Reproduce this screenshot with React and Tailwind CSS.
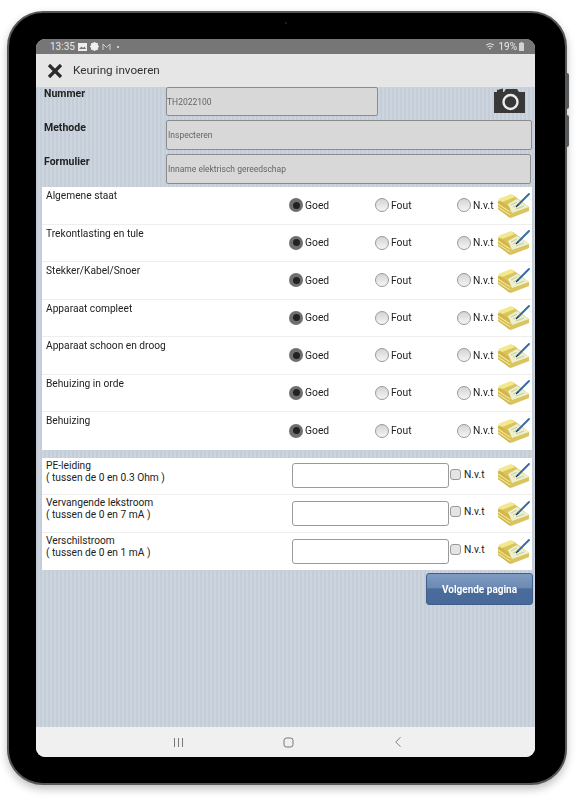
import React from 'react';
import { X, ChevronLeft } from 'lucide-react';

const checks = [
    'Algemene staat',
    'Trekontlasting en tule',
    'Stekker/Kabel/Snoer',
    'Apparaat compleet',
    'Apparaat schoon en droog',
    'Behuizing in orde',
    'Behuizing',
];

const measures = [
    { name: 'PE-leiding', range: '( tussen de 0 en 0.3 Ohm )' },
    { name: 'Vervangende lekstroom', range: '( tussen de 0 en 7 mA )' },
    { name: 'Verschilstroom', range: '( tussen de 0 en 1 mA )' },
];

const headerFields = [
    { label: 'Methode', value: 'Inspecteren', width: 'w-[366px]' },
    { label: 'Formulier', value: 'Inname elektrisch gereedschap', width: 'w-[365px]' },
];

function BookIcon() {
    return (
        <svg width="32" height="27" viewBox="0 0 32 27">
            <path d="M0 9 L15 3 L31 15 L31 19 L13 26 L0 17 Z" fill="#d9c45f" />
            <path d="M0 7 L13 2 L17 5 L4 10 Z" fill="#f4e88f" />
            <path d="M0 9 L4 10 L12 16 L12 26 L0 17 Z" fill="#d2b648" />
            <path d="M0 12 L12 20 M0 15 L12 23" stroke="#f2e79b" strokeWidth="1.1" />
            <path d="M10 12 L19 7 L31 15 L14 21 Z" fill="#eef0cd" />
            <path d="M13 13 L19 10 M15 15 L23 11 M18 17 L26 14" stroke="#bcc8a4" strokeWidth="0.9" />
            <path d="M20 13 L31 2" stroke="#3a6ba3" strokeWidth="1.9" strokeLinecap="round" />
            <path d="M18 15 L20 13" stroke="#1f3350" strokeWidth="1.3" />
        </svg>
    );
}

function Radio({ checked, label }) {
    return (
        <div className="flex items-center gap-[2px]">
            {checked ? (
                <span className="flex h-[14px] w-[14px] shrink-0 items-center justify-center rounded-full bg-[#6f6f6f]">
                    <span className="h-[7px] w-[7px] rounded-full bg-[#222222]" />
                </span>
            ) : (
                <span className="h-[14px] w-[14px] shrink-0 rounded-full border border-[#999999] bg-gradient-to-b from-[#d4d4d4] to-[#f5f5f5]" />
            )}
            <span className="text-[10.3px] text-[#222222]">{label}</span>
        </div>
    );
}

function CheckRow({ title, last }) {
    return (
        <div className={`grid h-[37.5px] grid-cols-[247px_86px_82px_41px_34px] ${last ? '' : 'border-b border-[#eeeeee]'}`}>
            <div className="pl-[4px] pt-[2px] text-[10.2px] leading-[13px] text-[#222222]">{title}</div>
            <div className="flex items-center"><Radio checked label="Goed" /></div>
            <div className="flex items-center"><Radio label="Fout" /></div>
            <div className="flex items-center"><Radio label="N.v.t" /></div>
            <div className="flex items-center"><BookIcon /></div>
        </div>
    );
}

function MeasureRow({ name, range, last }) {
    return (
        <div className={`grid h-[37.5px] grid-cols-[250px_158px_48px_34px] ${last ? '' : 'border-b border-[#eeeeee]'}`}>
            <div className="pl-[4px] pt-[2px] text-[10.2px] leading-[12px] text-[#222222]">
                <div>{name}</div>
                <div>{range}</div>
            </div>
            <div className="flex items-center">
                <div className="h-[25px] w-[157px] rounded-[3px] border border-[#9a9a9a] bg-white" />
            </div>
            <div className="flex items-center gap-[3px] pb-[3px]">
                <span className="h-[11px] w-[11px] rounded-[3px] border border-[#9a9a9a] bg-[#e4e4e4]" />
                <span className="text-[10.3px] text-[#222222]">N.v.t</span>
            </div>
            <div className="flex items-center"><BookIcon /></div>
        </div>
    );
}

function StatusBar() {
    return (
        <div className="flex h-[15px] shrink-0 items-center justify-between bg-[#767676] pl-[14px] pr-[11px] text-[10px] text-[#e8e8e8]">
            <div className="flex items-center gap-[3px]">
                <span>13:35</span>
                <svg width="9" height="8" viewBox="0 0 9 8"><path d="M0 0H9V8H0Z" fill="#eeeeee" /><path d="M1 6L3.5 3.5L5 5L6.5 3.5L8 6Z" fill="#767676" /></svg>
                <svg width="9" height="9" viewBox="0 0 9 9"><circle cx="4.5" cy="4.5" r="2.8" fill="none" stroke="#eeeeee" strokeWidth="2.2" /><path d="M4.5 0V9M0 4.5H9M1.3 1.3L7.7 7.7M7.7 1.3L1.3 7.7" stroke="#eeeeee" strokeWidth="1" /></svg>
                <svg width="9" height="8" viewBox="0 0 9 8"><path d="M1 7V1L4.5 4.5L8 1V7" fill="none" stroke="#cfcfcf" strokeWidth="1" /></svg>
                <span className="ml-[3px] h-[2px] w-[2px] rounded-full bg-[#eeeeee]" />
            </div>
            <div className="flex items-center gap-[2px]">
                <svg width="11" height="9" viewBox="0 0 11 9"><path d="M1 3Q5 0 9 3M2.5 5Q5 3 7.5 5M4 7Q5 6 6 7" fill="none" stroke="#e2e2e2" strokeWidth="1" /></svg>
                <span>19%</span>
                <svg width="5" height="9" viewBox="0 0 5 9"><path d="M1.5 0H3.5V1H5V9H0V1H1.5Z" fill="#d2d2d2" /></svg>
            </div>
        </div>
    );
}

function HeaderForm() {
    return (
        <div className="flex h-[100px] shrink-0 flex-col gap-[4px] pl-[8px]">
            <div className="flex h-[29px]">
                <div className="w-[122px] text-[10.5px] font-bold leading-[13px] text-[#222222]">Nummer</div>
                <div className="flex w-[212px] items-center rounded-[2px] border border-[#8c8c8c] bg-[#d8d8d8] pt-[1px] text-[8.5px] text-[#666666]">TH2022100</div>
                <svg className="ml-[116px] mt-[1px]" width="31" height="25" viewBox="0 0 31 25">
                    <path d="M0 4H3V2L9 0.5V4H10L12 1H23L25 4H31V25H0Z" fill="#383838" />
                    <circle cx="16.5" cy="14" r="7" fill="none" stroke="#e8ecef" strokeWidth="2.4" />
                </svg>
            </div>
            {headerFields.map((f) => (
                <div key={f.label} className="flex h-[30px]">
                    <div className="w-[122px] pt-[1px] text-[10.5px] font-bold leading-[13px] text-[#222222]">{f.label}</div>
                    <div className={`flex items-center rounded-[2px] border border-[#8c8c8c] bg-[#d8d8d8] pl-[1px] pt-[1px] text-[8.5px] text-[#666666] ${f.width}`}>{f.value}</div>
                </div>
            ))}
        </div>
    );
}

function App() {
    return (
        <div className="h-[800px] w-[582px] overflow-hidden bg-white pl-[7px] pt-[11px] font-['Roboto',sans-serif]">
            <div className="relative flex h-[774px] w-[560px] rounded-[36px] border-2 border-[#55595c] bg-black pl-[27px] pt-[26px] shadow-[0_4px_8px_rgba(0,0,0,0.25)] blur-[0.35px]">
                <span className="absolute right-[-4px] top-[60px] h-[36px] w-[3px] rounded-r-[2px] bg-[#55595c]" />
                <span className="absolute right-[-4px] top-[102px] h-[32px] w-[3px] rounded-r-[2px] bg-[#55595c]" />
                <span className="absolute left-[276px] top-[9px] h-[2px] w-[2px] rounded-full bg-[#2a2a2a]" />

                <div className="flex h-[718px] w-[499px] flex-col overflow-hidden rounded-[9px] bg-[repeating-linear-gradient(90deg,#c4cdd8_0px,#c4cdd8_2px,#ccd4dd_2px,#ccd4dd_4px)]">
                    <StatusBar />

                    <div className="flex h-[33px] shrink-0 items-center bg-[#e6e6e6] pl-[7px]">
                        <X size={24} strokeWidth={3.2} strokeLinecap="butt" className="text-[#2b2b2b]" />
                        <span className="ml-[6px] text-[11.7px] text-[#333333]">Keuring invoeren</span>
                    </div>

                    <HeaderForm />

                    <div className="ml-[6px] w-[490px] shrink-0 bg-white">
                        {checks.map((c, i) => (
                            <CheckRow key={c} title={c} last={i === checks.length - 1} />
                        ))}
                    </div>

                    <div className="ml-[6px] mt-[8px] w-[490px] shrink-0 bg-white">
                        {measures.map((m, i) => (
                            <MeasureRow key={m.name} name={m.name} range={m.range} last={i === measures.length - 1} />
                        ))}
                    </div>

                    <div className="mt-[3px] flex shrink-0 justify-end pr-[2px]">
                        <button className="h-[32px] w-[107px] rounded-[3px] border border-[#3f5f8a] bg-[linear-gradient(#7f9bc0_0%,#6c8ab3_45%,#4a6b9b_50%,#486a9a_100%)] text-[10px] font-bold text-white">
                            Volgende pagina
                        </button>
                    </div>

                    <div className="flex-1" />

                    <div className="flex h-[30px] shrink-0 items-center bg-[#f0f0f0] pl-[137px]">
                        <svg width="11" height="11" viewBox="0 0 11 11"><path d="M1.5 1V10M5.5 1V10M9.5 1V10" stroke="#777777" strokeWidth="1" /></svg>
                        <svg className="ml-[99px]" width="11" height="11" viewBox="0 0 11 11"><rect x="1" y="1" width="9" height="9" rx="2.5" fill="none" stroke="#777777" strokeWidth="1" /></svg>
                        <ChevronLeft size={18} strokeWidth={1.1} className="ml-[95px] text-[#666666]" />
                    </div>
                </div>
            </div>
        </div>
    );
}

export default App;
